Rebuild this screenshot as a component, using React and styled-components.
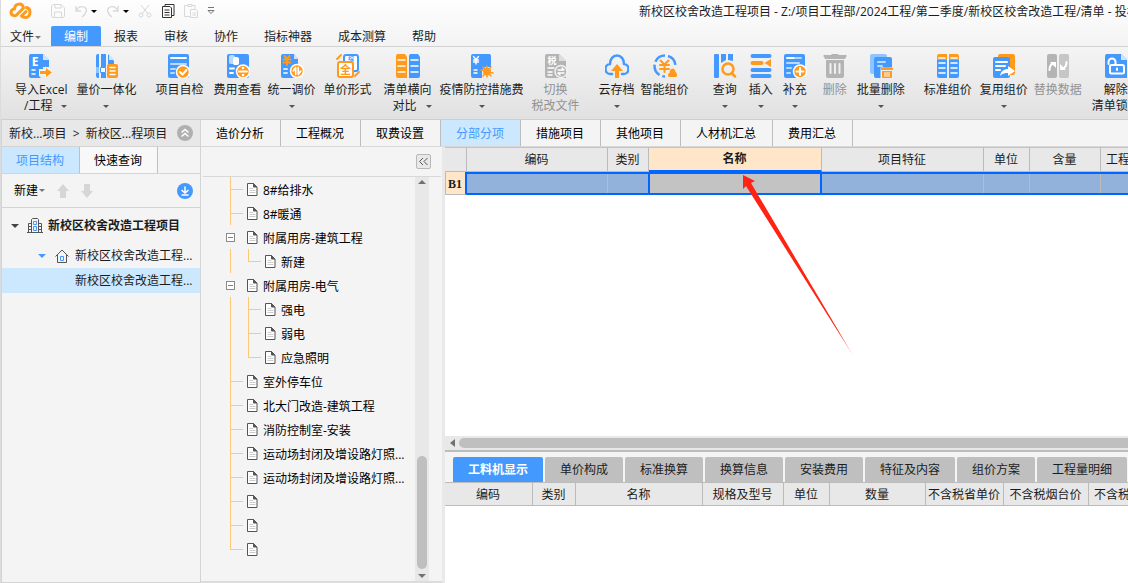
import { Fragment } from 'react';
import styled, { createGlobalStyle, css } from 'styled-components';

const blue = '#4499ff';
const orange = '#ff9a1c';
const grey = '#b4b4b4';
const frame = '#0066ff';

const GlobalStyle = createGlobalStyle`
  * {
    box-sizing: border-box;
  }
  body {
    margin: 0;
    font: 12px/16px "Open Sans", "Noto Sans CJK SC", sans-serif;
    color: #1c1c1c;
    overflow: hidden;
  }
  button {
    margin: 0;
    padding: 0;
    border: 0;
    background: none;
    font: inherit;
    color: inherit;
    white-space: nowrap;
  }
  svg {
    display: block;
    flex: none;
  }
`;

const Window = styled.div`
  display: flex;
  flex-direction: column;
  height: 100vh;
  border-left: 1px solid #dcdcdc;
  background: #f4f4f4;
`;

/* title bar and menu */

const Top = styled.header`
  background: linear-gradient(#fefefe, #f3f3f3);
  border-bottom: 1px solid #d2d2d2;
`;

const TitleBar = styled.div`
  display: flex;
  align-items: center;
  height: 26px;
  padding: 0 0 4px 8px;
  overflow: hidden;
`;

const QuickTools = styled.div`
  display: flex;
  align-items: center;
  gap: 5px;
  width: 630px;
  flex: none;
`;

const QuickButton = styled.button`
  display: flex;
  align-items: center;
  gap: 3px;
  margin-left: ${(p) => (p.$space ? '14px' : '4px')};
`;

const Title = styled.div`
  padding-top: 2px;
  white-space: nowrap;
`;

const Menu = styled.nav`
  display: flex;
  height: 20px;
`;

const MenuItem = styled.button`
  display: flex;
  align-items: center;
  gap: 1px;
  padding: 2px 13px 0;
  ${(p) => p.$first && css`
    width: 50px;
    padding: 2px 0 0 9px;
  `}
  ${(p) => p.$active && css`
    background: ${blue};
    color: #fff;
    border-radius: 2px 2px 0 0;
  `}
`;

/* ribbon */

const Ribbon = styled.div`
  display: flex;
  align-items: flex-start;
  height: 73px;
  padding: 7px 0 0 14px;
  background: linear-gradient(#f4f4f4, #e1e1e1);
  border-bottom: 1px solid #cfcfcf;
  overflow: hidden;
`;

const RibbonButton = styled.button`
  display: flex;
  flex-direction: column;
  align-items: center;
  flex: none;
  margin-left: ${(p) => p.$space}px;
  color: ${(p) => (p.disabled ? '#929292' : 'inherit')};
`;

const RibbonLabel = styled.span`
  margin-top: 4px;
`;

const RibbonSecond = styled.span`
  display: flex;
  align-items: center;
  justify-content: ${(p) => (p.$split ? 'space-between' : 'center')};
  width: 100%;
  height: 16px;
  padding-left: ${(p) => (p.$split ? '9px' : '0')};
`;

const Caret = styled.i`
  flex: none;
  border: ${(p) => p.$size || 3}px solid transparent;
  border-top-color: ${(p) => p.$color || '#555'};
  border-bottom: 0;
`;

/* left side */

const Body = styled.div`
  display: flex;
  flex: 1;
  min-height: 0;
`;

const Side = styled.aside`
  width: 200px;
  flex: none;
  border: 1px solid #d4d4d4;
  border-top: 0;
`;

const Crumbs = styled.div`
  display: flex;
  align-items: center;
  justify-content: space-between;
  height: 27px;
  padding: 0 7px;
  background: #e8e8e8;
  border-bottom: 1px solid #d4d4d4;
`;

const Path = styled.span`
  padding-top: 2px;
`;

const SideTabs = styled.div`
  display: flex;
  height: 27px;
  border-bottom: 1px solid #d4d4d4;
`;

const SideTab = styled.button`
  padding: 2px 15px 0 14px;
  border-right: 1px solid #c0c0c0;
  background: ${(p) => (p.$active ? '#cce8ff' : '#f8f8f8')};
  color: ${(p) => (p.$active ? blue : '#000')};
`;

const SideTools = styled.div`
  display: flex;
  align-items: center;
  gap: 12px;
  height: 34px;
  padding: 0 7px 0 12px;
  border-bottom: 1px solid #d4d4d4;
`;

const ToolButton = styled.button`
  display: flex;
  align-items: center;
  gap: 1px;
  color: #000;
  margin-left: ${(p) => (p.$end ? 'auto' : '0')};
`;

const ProjectRow = styled.button`
  display: flex;
  align-items: center;
  width: 100%;
  height: ${(p) => (p.$root ? '35px' : '25px')};
  gap: ${(p) => (p.$root ? '5px' : '6px')};
  padding-left: ${(p) => p.$indent}px;
  font-weight: ${(p) => (p.$root ? 'bold' : 'normal')};
  background: ${(p) => (p.$active ? '#cce8ff' : 'none')};

  i {
    margin-right: 3px;
  }
`;

/* work area */

const Work = styled.main`
  display: flex;
  flex-direction: column;
  flex: 1;
  min-width: 0;
`;

const Tabs = styled.div`
  display: flex;
  height: 27px;
  flex: none;
  border-bottom: 1px solid #d8d8d8;
`;

const Tab = styled.button`
  padding: 2px 16px 0 15px;
  border-right: 1px solid #bdbdbd;
  background: ${(p) => (p.$active ? '#cce8ff' : 'none')};
  color: ${(p) => (p.$active ? blue : '#000')};
`;

const Split = styled.div`
  display: flex;
  flex: 1;
  min-height: 0;
`;

const TreePane = styled.section`
  display: flex;
  flex-direction: column;
  width: 244px;
  flex: none;
  border-right: 3px solid #e9e9e9;
`;

const TreeHead = styled.div`
  display: flex;
  align-items: center;
  justify-content: flex-end;
  height: 30px;
  margin: 0 1px 0 2px;
  padding-right: 10px;
  border-bottom: 1px solid #d8d8d8;
`;

const FoldButton = styled.button`
  display: grid;
  place-items: center;
  width: 15px;
  height: 15px;
  border: 1px solid #b8b8b8;
  border-radius: 2px;
  background: #e8e8e8;
`;

const TreeBody = styled.div`
  display: flex;
  flex: 1;
  min-height: 0;
  padding-right: 13px;
  border-bottom: 2px solid #dcdcdc;
`;

const TreeList = styled.ul`
  flex: 1;
  min-width: 0;
  margin: 0;
  padding: 0 0 0 29px;
  list-style: none;
  color: #000;
  overflow: hidden;
`;

const TreeItem = styled.li`
  display: flex;
  align-items: center;
  height: 24px;
  white-space: nowrap;

  svg {
    margin: 0 5px 0 -1px;
  }
`;

const TreeText = styled.span`
  padding-top: 3px;
`;

const Guide = styled.span`
  width: 13px;
  height: 24px;
  margin-right: 5px;
  flex: none;
  background-image: linear-gradient(#fdc87e, #fdc87e), linear-gradient(#fdc87e, #fdc87e);
  background-repeat: no-repeat;
  background-position: 0 0, 0 12px;
  background-size: 1px ${(p) => (p.$kind === 'end' ? '12px' : '24px')},
    ${(p) => (p.$kind === 'line' ? '0 0' : '13px 1px')};
`;

const Expander = styled.button`
  display: grid;
  place-items: center;
  width: 9px;
  height: 9px;
  margin: 0 13px 0 -4px;
  border: 1px solid #8a8a8a;
  background: #fff;

  &::after {
    content: '';
    width: 5px;
    height: 1px;
    background: #2a9fc9;
  }
`;

const ScrollColumn = styled.div`
  display: flex;
  flex-direction: column;
  justify-content: space-between;
  align-items: center;
  width: 14px;
  padding: 3px 0;
  background: #e8e8e8;
`;

const ScrollRow = styled.div`
  display: flex;
  align-items: center;
  gap: 4px;
  height: 14px;
  flex: none;
  padding-left: 5px;
  background: #e8e8e8;
`;

const Thumb = styled.div`
  border-radius: 5px;
  background: #bfbfbf;
  ${(p) => (p.$across ? css`
    flex: 1;
    height: 10px;
    margin-right: -8px;
  ` : css`
    width: 10px;
    height: 113px;
    margin: auto 0 5px;
  `)}
`;

const Sheets = styled.section`
  display: flex;
  flex-direction: column;
  flex: 1;
  min-width: 0;
  background: #fff;
`;

const GridArea = styled.div`
  position: relative;
  flex: 1;
  overflow: hidden;
`;

const Pointer = styled.svg`
  position: absolute;
  left: 298px;
  top: 28px;
`;

const Table = styled.table`
  width: 0;
  table-layout: fixed;
  border-collapse: separate;
  border-spacing: 0;

  th {
    height: ${(p) => p.$head || 24}px;
    padding: 1px 1px 0 0;
    border-right: 1px solid #bbb;
    border-bottom: 1px solid #bbb;
    background: #e8e8e8;
    font-weight: normal;
    white-space: nowrap;
    overflow: hidden;
  }
`;

const MainTable = styled(Table)`
  thead th {
    border-top: 1px solid #c4c4c4;
    height: 25px;
    padding-top: 0;
  }
  thead th.current {
    background: #ffe6c8;
    border-bottom: 2px solid ${frame};
    font-weight: bold;
  }
  tbody th {
    height: 23px;
    background: #ffe6c8;
    border-left: 1px solid #bbb;
    border-right: 2px solid ${frame};
    font: bold 12px/16px "Liberation Serif", serif;
  }
  tbody td {
    padding: 0;
    background: #92b1db;
    border: 0 solid ${frame};
    border-width: 2px 0;
    box-shadow: inset -1px 0 #bbb;
  }
  tbody td.before {
    border-right-width: 1px;
    box-shadow: none;
  }
  tbody td.current {
    background: #c3c3c3;
    border-width: 2px 2px 2px 1px;
    box-shadow: none;
  }
`;

const Detail = styled.div`
  height: 133px;
  flex: none;
  border-top: 2px solid #bdbdbd;
  overflow: hidden;
`;

const DetailTabs = styled.div`
  display: flex;
  gap: 2px;
  height: 31px;
  padding: 5px 0 0 8px;
  background: #f4f4f4;
  border-bottom: 1px solid #bbb;
`;

const DetailTab = styled.button`
  padding: 1px 15px 0;
  border-radius: 2px 2px 0 0;
  background: ${(p) => (p.$active ? blue : '#bfbfbf')};
  color: ${(p) => (p.$active ? '#fff' : '#1c1c1c')};
  font-weight: ${(p) => (p.$active ? 'bold' : 'normal')};
`;

/* icons */

const Glyph = ({ x, y, size = 9, fill = '#fff', children }) => (
  <text x={x} y={y} fontSize={size} fontWeight="bold" fill={fill} textAnchor="middle">{children}</text>
);

const Bars = ({ d, color = '#fff', width = 2 }) => (
  <path d={d} stroke={color} strokeWidth={width} fill="none" strokeLinecap="round" strokeLinejoin="round" />
);

const drawings = {
  import: (
    <>
      <path d="M2 0h12l6 6v7h-6v2h-4v7l2 2H2a2 2 0 0 1-2-2V2a2 2 0 0 1 2-2z" fill={blue} />
      <path d="M14 0l6 6h-6z" fill="#cfe4ff" />
      <Glyph x="6" y="12" size="12">E</Glyph>
      <Bars d="M3 16h3M3 20h3" width="1.600" />
      <path d="M10.500 16.500h6v-3.500l7 5.500-7 5.500v-3.500h-6z" fill={orange} stroke="#fff" strokeWidth=".8" />
    </>
  ),
  building: (
    <>
      <path d="M2 2a2 2 0 0 1 2-2h1v13H2zM7 0h5v13H7zM14 0l6 7v5h-6zM2 19h3v5H4a2 2 0 0 1-2-2zM7 19h5v5H7z" fill={blue} />
      <path d="M15 0l5 6h-5z" fill="#cfe4ff" />
      <path d="M2 13h3v6H2z" fill="#8fc2ff" />
      <path d="M6.500 13.500h5v5h-5z" fill="#fff" stroke={blue} />
      <rect x="13" y="10" width="11" height="14" rx="2" fill={orange} />
      <Bars d="M16 13.500h5M16 17h5M16 20.500h5" width="1.600" />
    </>
  ),
  check: (
    <>
      <rect x="1" width="21" height="24" rx="2" fill={blue} />
      <Bars d="M4 4h15" />
      <Bars d="M4 10h15M4 15h4M4 19h3" color="#b9d9ff" />
      <circle cx="16" cy="18" r="6.500" fill={orange} stroke="#fff" strokeWidth="1.500" />
      <Bars d="M13 18l2.500 2.500 4-4.500" />
    </>
  ),
  fee: (
    <>
      <rect x="1" width="22" height="24" rx="2" fill={blue} />
      <path d="M3 2.500c0-2 6-2 6 0v6c0 2-6 2-6 0z" fill="#b9d9ff" />
      <path d="M7 4.500c0-2 6-2 6 0v5c0 2-6 2-6 0z" fill="#fff" />
      <Bars d="M4 14.500h4M4 19h3" />
      <circle cx="17" cy="17.500" r="6.500" fill={orange} stroke="#fff" strokeWidth="1.500" />
      <Bars d="M13 17.500h8" width="1.800" />
      <circle cx="17" cy="14" r="1.300" fill="#fff" />
      <circle cx="17" cy="21" r="1.300" fill="#fff" />
    </>
  ),
  adjust: (
    <>
      <path d="M3 0h11l4 5v19H3a2 2 0 0 1-2-2V2a2 2 0 0 1 2-2z" fill={blue} />
      <path d="M14 0l4 5h-4z" fill="#cfe4ff" />
      <Bars d="M4.500 2l2.500 3 2.500-3M3.500 5.500h7M3.500 8.500h7M7 5v6" color={orange} />
      <Bars d="M4 15h3M4 19h3" color="#cfe4ff" />
      <circle cx="17" cy="17" r="6.500" fill={orange} stroke="#fff" strokeWidth="1.500" />
      <Bars d="M15.700 20.500v-7l-2.500 3.500M18.300 13.500v7l2.500-3.500" width="1.600" />
    </>
  ),
  form: (
    <>
      <rect x="8" y="1" width="14" height="16" rx="2" fill="#fff" stroke={blue} strokeWidth="2" />
      <Glyph x="15" y="7" size="6" fill={blue}>综</Glyph>
      <rect x="2" y="8" width="15" height="15" rx="2" fill="#fff" stroke={orange} strokeWidth="2" />
      <Glyph x="9.500" y="20" size="11" fill={orange}>全</Glyph>
      <Bars d="M1 5l4-4M19 22l4-4" color={orange} width="1.800" />
    </>
  ),
  compare: (
    <>
      <path d="M2 0h7l2 3v21H2a2 2 0 0 1-2-2V2a2 2 0 0 1 2-2z" fill={orange} />
      <path d="M15 0h7l2 3v19a2 2 0 0 1-2 2h-9V2a2 2 0 0 1 2-2z" fill={blue} />
      <Bars d="M2 6h7M2 12h7M2 18h7M15 6h7M15 12h7M15 18h7" width="1.600" />
    </>
  ),
  virus: (
    <>
      <path d="M3 0h16a2 2 0 0 1 2 2v11h-6l-3 4v7H3a2 2 0 0 1-2-2V2a2 2 0 0 1 2-2z" fill={blue} />
      <Bars d="M3.500 2.500l2.500 3 2.500-3M3.500 6h5M3.500 8h5M6 6v4M4 16h3M4 19h3" width="1.400" />
      <circle cx="17" cy="17.500" r="4" fill={orange} />
      <Bars d="M17 12v11M11 16l12 3M13 22l8-9M13 13l8 9" color={orange} width="1.500" />
    </>
  ),
  tax: (
    <>
      <path d="M3 0h12l7 7v17H3a2 2 0 0 1-2-2V2a2 2 0 0 1 2-2z" fill={grey} />
      <path d="M15 0l7 7h-7z" fill="#ddd" />
      <Glyph x="8" y="10" size="9">税</Glyph>
      <Bars d="M4 14h6M4 18h4M4 21h4" width="1.500" />
      <circle cx="17" cy="17.500" r="6" fill={grey} stroke="#f2f2f2" strokeWidth="1.500" />
      <Bars d="M14 16h6l-2-2M20 19h-6l2 2" width="1.500" />
    </>
  ),
  cloud: (
    <>
      <Bars d="M7 20H6a5 5 0 0 1-1-10C5 5 8 1.500 12 1.500S19 5 19 10a5 5 0 0 1-1 10h-1" color={blue} width="2.500" />
      <path d="M12 10l6 7h-4v7h-4v-7H6z" fill={orange} />
    </>
  ),
  smart: (
    <>
      <path d="M12 1.500a10.500 10.500 0 1 0 0 21M15 2a10.500 10.500 0 0 1 7.500 10" fill="none" stroke={blue} strokeWidth="2.500" strokeDasharray="12 3" />
      <Bars d="M7.500 6.500l4 4 4-4M7 11h9M7 15h9M11.500 10v8" color={orange} />
      <path d="M19.500 14.500c2 0 3 2 3 3.500 2 1 2 5 0 5h-6c-2 0-2-4 0-4 0-2 1-4.500 3-4.500z" fill={orange} />
    </>
  ),
  query: (
    <>
      <path d="M1 1a1 1 0 0 1 1-1h3a1 1 0 0 1 1 1v22a1 1 0 0 1-1 1H2a1 1 0 0 1-1-1zM8 0h5v6l-5 3zM15 0h5v7l-5-1z" fill={blue} />
      <circle cx="15" cy="15" r="5.500" fill="none" stroke={orange} strokeWidth="2.500" />
      <Bars d="M19 19.500l3 3" color={orange} width="2.500" />
    </>
  ),
  insert: (
    <>
      <Bars d="M3.500 2h17M3.500 16h17M3.500 22h17" color={blue} width="4" />
      <Bars d="M3.500 9h9" color={orange} width="4" />
      <path d="M15.500 9l6.500-4v8z" fill={orange} />
    </>
  ),
  add: (
    <>
      <rect x="1" width="21" height="24" rx="2" fill={blue} />
      <Bars d="M4 4h7" />
      <Bars d="M13 4h5M4 9h12M4 14h4M4 19h3" color="#b9d9ff" />
      <circle cx="17" cy="17.500" r="6.500" fill={orange} stroke="#fff" strokeWidth="1.500" />
      <Bars d="M13.500 17.500h7M17 14v7" />
    </>
  ),
  trash: (
    <>
      <path d="M2 1h6l1-1h6l1 1h6a1 1 0 0 1 1 2l-1 2H2L1 3a1 1 0 0 1 1-2zM3 6h18v16a2 2 0 0 1-2 2H5a2 2 0 0 1-2-2z" fill={grey} />
      <Bars d="M7.500 10v9M12 10v9M16.500 10v9" color="#f0f0f0" />
    </>
  ),
  batch: (
    <>
      <rect x="1" width="17" height="20" rx="2" fill="#8fc4ff" />
      <rect x="5" y="3" width="18" height="21" rx="2" fill={blue} />
      <Bars d="M9 8h7M9 12h4" color="#b9d9ff" />
      <path d="M11.500 13.500h12V24h-12z" fill="#e8f2ff" />
      <path d="M12 14h3l1-1h4l1 1h3v2H12zM13 17h10v6a1 1 0 0 1-1 1h-8a1 1 0 0 1-1-1z" fill={orange} />
      <Bars d="M16 18.500v4M18 18.500v4M20 18.500v4" width="1" />
    </>
  ),
  standard: (
    <>
      <path d="M1 6V2a2 2 0 0 1 2-2h8v6zM13 6V0h8a2 2 0 0 1 2 2v4z" fill={orange} />
      <path d="M1 6h10v18H3a2 2 0 0 1-2-2zM13 6h10v16a2 2 0 0 1-2 2h-8z" fill={blue} />
      <Bars d="M3 4h6M3 9h6M3 14h6M3 19h6M15 4h6M15 9h6M15 14h6M15 19h6" width="1.600" />
    </>
  ),
  reuse: (
    <>
      <rect x="6" width="17" height="21" rx="2" fill={orange} />
      <rect x="1" y="3" width="17" height="21" rx="2" fill={blue} />
      <Bars d="M4 8h11M4 12h9M4 16h4" />
      <path d="M8 22c1-5 4-7 8-7v-3l7 5-7 5v-3c-3 0-5 0-8 3z" fill="#fff" />
    </>
  ),
  replace: (
    <>
      <rect x="1" width="10" height="24" rx="2" fill={grey} />
      <rect x="13" width="10" height="24" rx="2" fill="#c6c6c6" />
      <Bars d="M3.500 16q0-5 4-7" />
      <path d="M4 8h6v6z" fill="#fff" />
      <Bars d="M20.500 8q0 5-4 7" />
      <path d="M20 16h-6v-6z" fill="#fff" />
    </>
  ),
  unlock: (
    <>
      <path d="M3 0h14l6 6v18H3a2 2 0 0 1-2-2V2a2 2 0 0 1 2-2z" fill={blue} />
      <path d="M17 0l6 6h-6z" fill="#cfe4ff" />
      <rect x="6" y="11" width="14" height="8.500" rx="1.500" fill={blue} stroke="#fff" strokeWidth="2" />
      <Bars d="M4.500 10V8a3.500 3.500 0 0 1 7 0v3M13 14.500v1.500" />
    </>
  ),
};

const Icon = ({ name }) => (
  <svg width="24" height="24" viewBox="0 0 24 24">{drawings[name]}</svg>
);

const Line = ({ size = 14, color = '#d8d8d8', children }) => (
  <svg width={size} height={size} viewBox="0 0 14 14" fill="none" stroke={color}>{children}</svg>
);

const PageIcon = () => (
  <svg width="11" height="13" viewBox="0 0 11 13" fill="#fff" stroke="#555">
    <path d="M.5.500h6l3.500 3.500v8.500H.5z" />
    <path d="M6.500.500v3.500H10z" fill="#555" />
    <path d="M2.500 5.500h4M2.500 7.500h6M2.500 9.500h6" stroke="#ccc" />
  </svg>
);

const Logo = () => (
  <svg width="23" height="18" viewBox="0 0 23 18" fill="none" stroke="#ff9a1c" strokeWidth="3" strokeLinecap="round" strokeLinejoin="round">
    <path d="M14.500 6L7.500 13c-1.500 1.500-5.500.5-5.500-2.500C2 8.500 3.500 7 5.500 7 5.500 3.500 8 2 10.500 2c2 0 3.500 1 4 4" />
    <path d="M17.500 5.500c2 .5 3.500 2 3.500 4.500 0 3-1.500 5.500-4.500 5.500-1.500 0-3-.5-4-1.500l4.500-4.500" />
  </svg>
);

/* data */

const menu = ['编制', '报表', '审核', '协作', '指标神器', '成本测算', '帮助'];

const ribbon = [
  { icon: 'import', label: '导入Excel', second: '/工程', menu: true, space: 0 },
  { icon: 'building', label: '量价一体化', menu: true, space: 9 },
  { icon: 'check', label: '项目自检', space: 19 },
  { icon: 'fee', label: '费用查看', space: 10 },
  { icon: 'adjust', label: '统一调价', menu: true, space: 6 },
  { icon: 'form', label: '单价形式', space: 8 },
  { icon: 'compare', label: '清单横向', second: '对比', menu: true, space: 12 },
  { icon: 'virus', label: '疫情防控措施费', menu: true, space: 8 },
  { icon: 'tax', label: '切换', second: '税改文件', disabled: true, space: 8 },
  { icon: 'cloud', label: '云存档', menu: true, space: 19 },
  { icon: 'smart', label: '智能组价', space: 6 },
  { icon: 'query', label: '查询', menu: true, space: 24 },
  { icon: 'insert', label: '插入', menu: true, space: 12 },
  { icon: 'add', label: '补充', menu: true, space: 10 },
  { icon: 'trash', label: '删除', disabled: true, space: 16 },
  { icon: 'batch', label: '批量删除', menu: true, space: 10 },
  { icon: 'standard', label: '标准组价', space: 19 },
  { icon: 'reuse', label: '复用组价', menu: true, space: 8 },
  { icon: 'replace', label: '替换数据', disabled: true, space: 6 },
  { icon: 'unlock', label: '解除', second: '清单锁定', space: 10 },
];

const tabs = ['造价分析', '工程概况', '取费设置', '分部分项', '措施项目', '其他项目', '人材机汇总', '费用汇总'];

const tree = [
  { text: '8#给排水', guides: ['tee'] },
  { text: '8#暖通', guides: ['tee'] },
  { text: '附属用房-建筑工程', open: true, guides: [] },
  { text: '新建', guides: ['line', 'end'] },
  { text: '附属用房-电气', open: true, guides: [] },
  { text: '强电', guides: ['line', 'tee'] },
  { text: '弱电', guides: ['line', 'tee'] },
  { text: '应急照明', guides: ['line', 'end'] },
  { text: '室外停车位', guides: ['tee'] },
  { text: '北大门改造-建筑工程', guides: ['tee'] },
  { text: '消防控制室-安装', guides: ['tee'] },
  { text: '运动场封闭及增设路灯照...', guides: ['tee'] },
  { text: '运动场封闭及增设路灯照...', guides: ['tee'] },
  { text: '', guides: ['tee'] },
  { text: '', guides: ['tee'] },
  { text: '', guides: ['end'] },
];

const columns = [
  ['', 22], ['编码', 141], ['类别', 41], ['名称', 173], ['项目特征', 162],
  ['单位', 46], ['含量', 71], ['工程量', 48],
];

const cellState = { 类别: 'before', 名称: 'current' };

const detailTabs = ['工料机显示', '单价构成', '标准换算', '换算信息', '安装费用', '特征及内容', '组价方案', '工程量明细'];

const detailColumns = [
  ['编码', 88], ['类别', 43], ['名称', 127], ['规格及型号', 81], ['单位', 46],
  ['数量', 96], ['不含税省单价', 78], ['不含税烟台价', 85], ['不含税', 48],
];

const Cols = ({ list }) => (
  <colgroup>
    {list.map(([name, width]) => <col key={name} width={width} />)}
  </colgroup>
);

function TopBar() {
  return (
    <Top>
      <TitleBar>
        <QuickTools>
          <Logo />
          <QuickButton $space aria-label="保存">
            <Line><path d="M.5 2v10l1 1.500h11l1-1.500V4L10 .500H2zM4 .500V4h6V.500M3.500 13.500V8h7v5.500" /></Line>
          </QuickButton>
          <QuickButton aria-label="撤销">
            <Line><path d="M2 2v5h5M2 7c2-4 5-5 8-4 4 2 3 6-2 10" strokeWidth="1.300" /></Line>
            <Caret $color="#000" />
          </QuickButton>
          <QuickButton aria-label="恢复">
            <Line><path d="M12 2v5H7M12 7c-2-4-5-5-8-4-4 2-3 6 2 10" strokeWidth="1.300" /></Line>
            <Caret $color="#000" />
          </QuickButton>
          <QuickButton aria-label="剪切">
            <Line><path d="M3 1l7 9M11 1l-7 9" /><circle cx="3" cy="11" r="2" /><circle cx="11" cy="11" r="2" /></Line>
          </QuickButton>
          <QuickButton aria-label="复制">
            <Line color="#333"><path d="M4 2.500V.500h9v11h-2M1.500 2.500H9l1.500 1.500v9.500h-9zM3.500 6h5M3.500 8.500h5M3.500 11h5" /></Line>
          </QuickButton>
          <QuickButton aria-label="粘贴">
            <Line><path d="M4 1.500H.5v11H6M8 1.500h3V5M4 .500h4v2H4zM6.500 5.500H12L13.500 7v6.500h-7zM8.500 9H12M8.500 11H12" /></Line>
          </QuickButton>
          <QuickButton aria-label="更多">
            <svg width="8" height="8" viewBox="0 0 8 8" fill="none" stroke="#777"><path d="M1 .5h6M1 3.500h6L4 6.500z" /></svg>
          </QuickButton>
        </QuickTools>
        <Title>新校区校舍改造工程项目 - Z:/项目工程部/2024工程/第二季度/新校区校舍改造工程/清单 - 投标</Title>
      </TitleBar>
      <Menu>
        <MenuItem $first>文件<Caret $color="#777" /></MenuItem>
        {menu.map((name, i) => <MenuItem key={name} $active={i === 0}>{name}</MenuItem>)}
      </Menu>
    </Top>
  );
}

function SidePanel() {
  return (
    <Side>
      <Crumbs>
        <Path>新校...项目 &nbsp;&gt;&nbsp; 新校区...程项目</Path>
        <ToolButton aria-label="收起">
          <svg width="16" height="16" viewBox="0 0 16 16" fill="none" stroke="#fff" strokeWidth="1.500">
            <circle cx="8" cy="8" r="8" fill="#b0b0b0" stroke="none" />
            <path d="M4.500 7.500L8 4.500l3.500 3M4.500 11.500L8 8.500l3.500 3" />
          </svg>
        </ToolButton>
      </Crumbs>
      <SideTabs>
        <SideTab $active>项目结构</SideTab>
        <SideTab>快速查询</SideTab>
      </SideTabs>
      <SideTools>
        <ToolButton>新建<Caret $color="#777" /></ToolButton>
        <ToolButton aria-label="上移">
          <svg width="12" height="14" viewBox="0 0 12 14" fill="#d6d6d6"><path d="M6 0l6 7H9v7H3V7H0z" /></svg>
        </ToolButton>
        <ToolButton aria-label="下移">
          <svg width="12" height="14" viewBox="0 0 12 14" fill="#d6d6d6"><path d="M6 14l6-7H9V0H3v7H0z" /></svg>
        </ToolButton>
        <ToolButton $end aria-label="下载">
          <svg width="16" height="16" viewBox="0 0 16 16" fill="none" stroke="#fff" strokeWidth="1.500">
            <circle cx="8" cy="8" r="8" fill={blue} stroke="none" />
            <path d="M8 3.500V10M4.500 7L8 10l3.500-3M4.500 12h7" />
          </svg>
        </ToolButton>
      </SideTools>
      <ProjectRow $root $indent={9}>
        <Caret $size={4} $color="#444" />
        <svg width="16" height="15" viewBox="0 0 16 15" fill="none" stroke="#555">
          <path d="M0 14.500h16M1.500 14V5.500h3M4.500 14V1.500l1-1h5l1 1V14M11.500 5.500h3V14M1.500 8.500h3M1.500 11.500h3M11.500 8.500h3M11.500 11.500h3" />
          <path d="M6.500 3.500h3v3h-3zM6.500 8.500h3v4h-3z" stroke={blue} />
        </svg>
        新校区校舍改造工程项目
      </ProjectRow>
      <ProjectRow $indent={36}>
        <Caret $size={4} $color={blue} />
        <svg width="14" height="14" viewBox="0 0 14 14" fill="none" stroke="#555">
          <path d="M.5 7.500L7 1l6.500 6.500M2.500 6v7.500h9V6" />
          <path d="M5.500 7.500h3v4h-3z" stroke={blue} />
        </svg>
        新校区校舍改造工程...
      </ProjectRow>
      <ProjectRow $active $indent={73}>新校区校舍改造工程...</ProjectRow>
    </Side>
  );
}

function TreePanel() {
  return (
    <TreePane>
      <TreeHead>
        <FoldButton aria-label="折叠">
          <svg width="11" height="9" viewBox="0 0 11 9" fill="none" stroke="#555"><path d="M5 1L1.500 4.500 5 8M9.500 1L6 4.500 9.500 8" /></svg>
        </FoldButton>
      </TreeHead>
      <TreeBody>
        <TreeList>
          {tree.map((row, i) => (
            <TreeItem key={i}>
              {row.guides.map((kind, n) => <Guide key={n} $kind={kind} />)}
              {row.open && <Expander aria-label="折叠" />}
              <PageIcon />
              <TreeText>{row.text}</TreeText>
            </TreeItem>
          ))}
        </TreeList>
        <ScrollColumn>
          <svg width="8" height="4" viewBox="0 0 8 4" fill="#707078"><path d="M0 4l4-4 4 4z" /></svg>
          <Thumb />
          <svg width="8" height="4" viewBox="0 0 8 4" fill="#707078"><path d="M0 0l4 4 4-4z" /></svg>
        </ScrollColumn>
      </TreeBody>
    </TreePane>
  );
}

function SheetPanel() {
  return (
    <Sheets>
      <GridArea>
        <MainTable>
          <Cols list={columns} />
          <thead>
            <tr>
              {columns.map(([name]) => (
                <th key={name} className={cellState[name]}>{name}</th>
              ))}
            </tr>
          </thead>
          <tbody>
            <tr>
              <th>B1</th>
              {columns.slice(1).map(([name]) => (
                <td key={name} className={cellState[name]} />
              ))}
            </tr>
          </tbody>
        </MainTable>
        <Pointer width="112" height="184" viewBox="0 0 112 184">
          <defs>
            <linearGradient id="fade" x1="0" y1="0" x2="1" y2="1">
              <stop offset="0.850" stopColor="#ff2314" />
              <stop offset="1" stopColor="#ff2314" stopOpacity="0.350" />
            </linearGradient>
          </defs>
          <path d="M0 0l12 6-4 2 103 174L3 11l-3 3z" fill="url(#fade)" />
        </Pointer>
      </GridArea>
      <ScrollRow>
        <svg width="5" height="8" viewBox="0 0 5 8" fill="#707078"><path d="M5 0L0 4l5 4z" /></svg>
        <Thumb $across />
      </ScrollRow>
      <Detail>
        <DetailTabs>
          {detailTabs.map((name, i) => <DetailTab key={name} $active={i === 0}>{name}</DetailTab>)}
        </DetailTabs>
        <Table $head={23}>
          <Cols list={detailColumns} />
          <thead>
            <tr>{detailColumns.map(([name]) => <th key={name}>{name}</th>)}</tr>
          </thead>
        </Table>
      </Detail>
    </Sheets>
  );
}

function App() {
  return (
    <Fragment>
      <GlobalStyle />
      <Window>
        <TopBar />
        <Ribbon>
          {ribbon.map((item) => (
            <RibbonButton key={item.label} $space={item.space} disabled={item.disabled}>
              <Icon name={item.icon} />
              <RibbonLabel>{item.label}</RibbonLabel>
              <RibbonSecond $split={item.second && item.menu}>
                {item.second}
                {item.menu && <Caret />}
              </RibbonSecond>
            </RibbonButton>
          ))}
        </Ribbon>
        <Body>
          <SidePanel />
          <Work>
            <Tabs>
              {tabs.map((name) => <Tab key={name} $active={name === '分部分项'}>{name}</Tab>)}
            </Tabs>
            <Split>
              <TreePanel />
              <SheetPanel />
            </Split>
          </Work>
        </Body>
      </Window>
    </Fragment>
  );
}

export default App;
